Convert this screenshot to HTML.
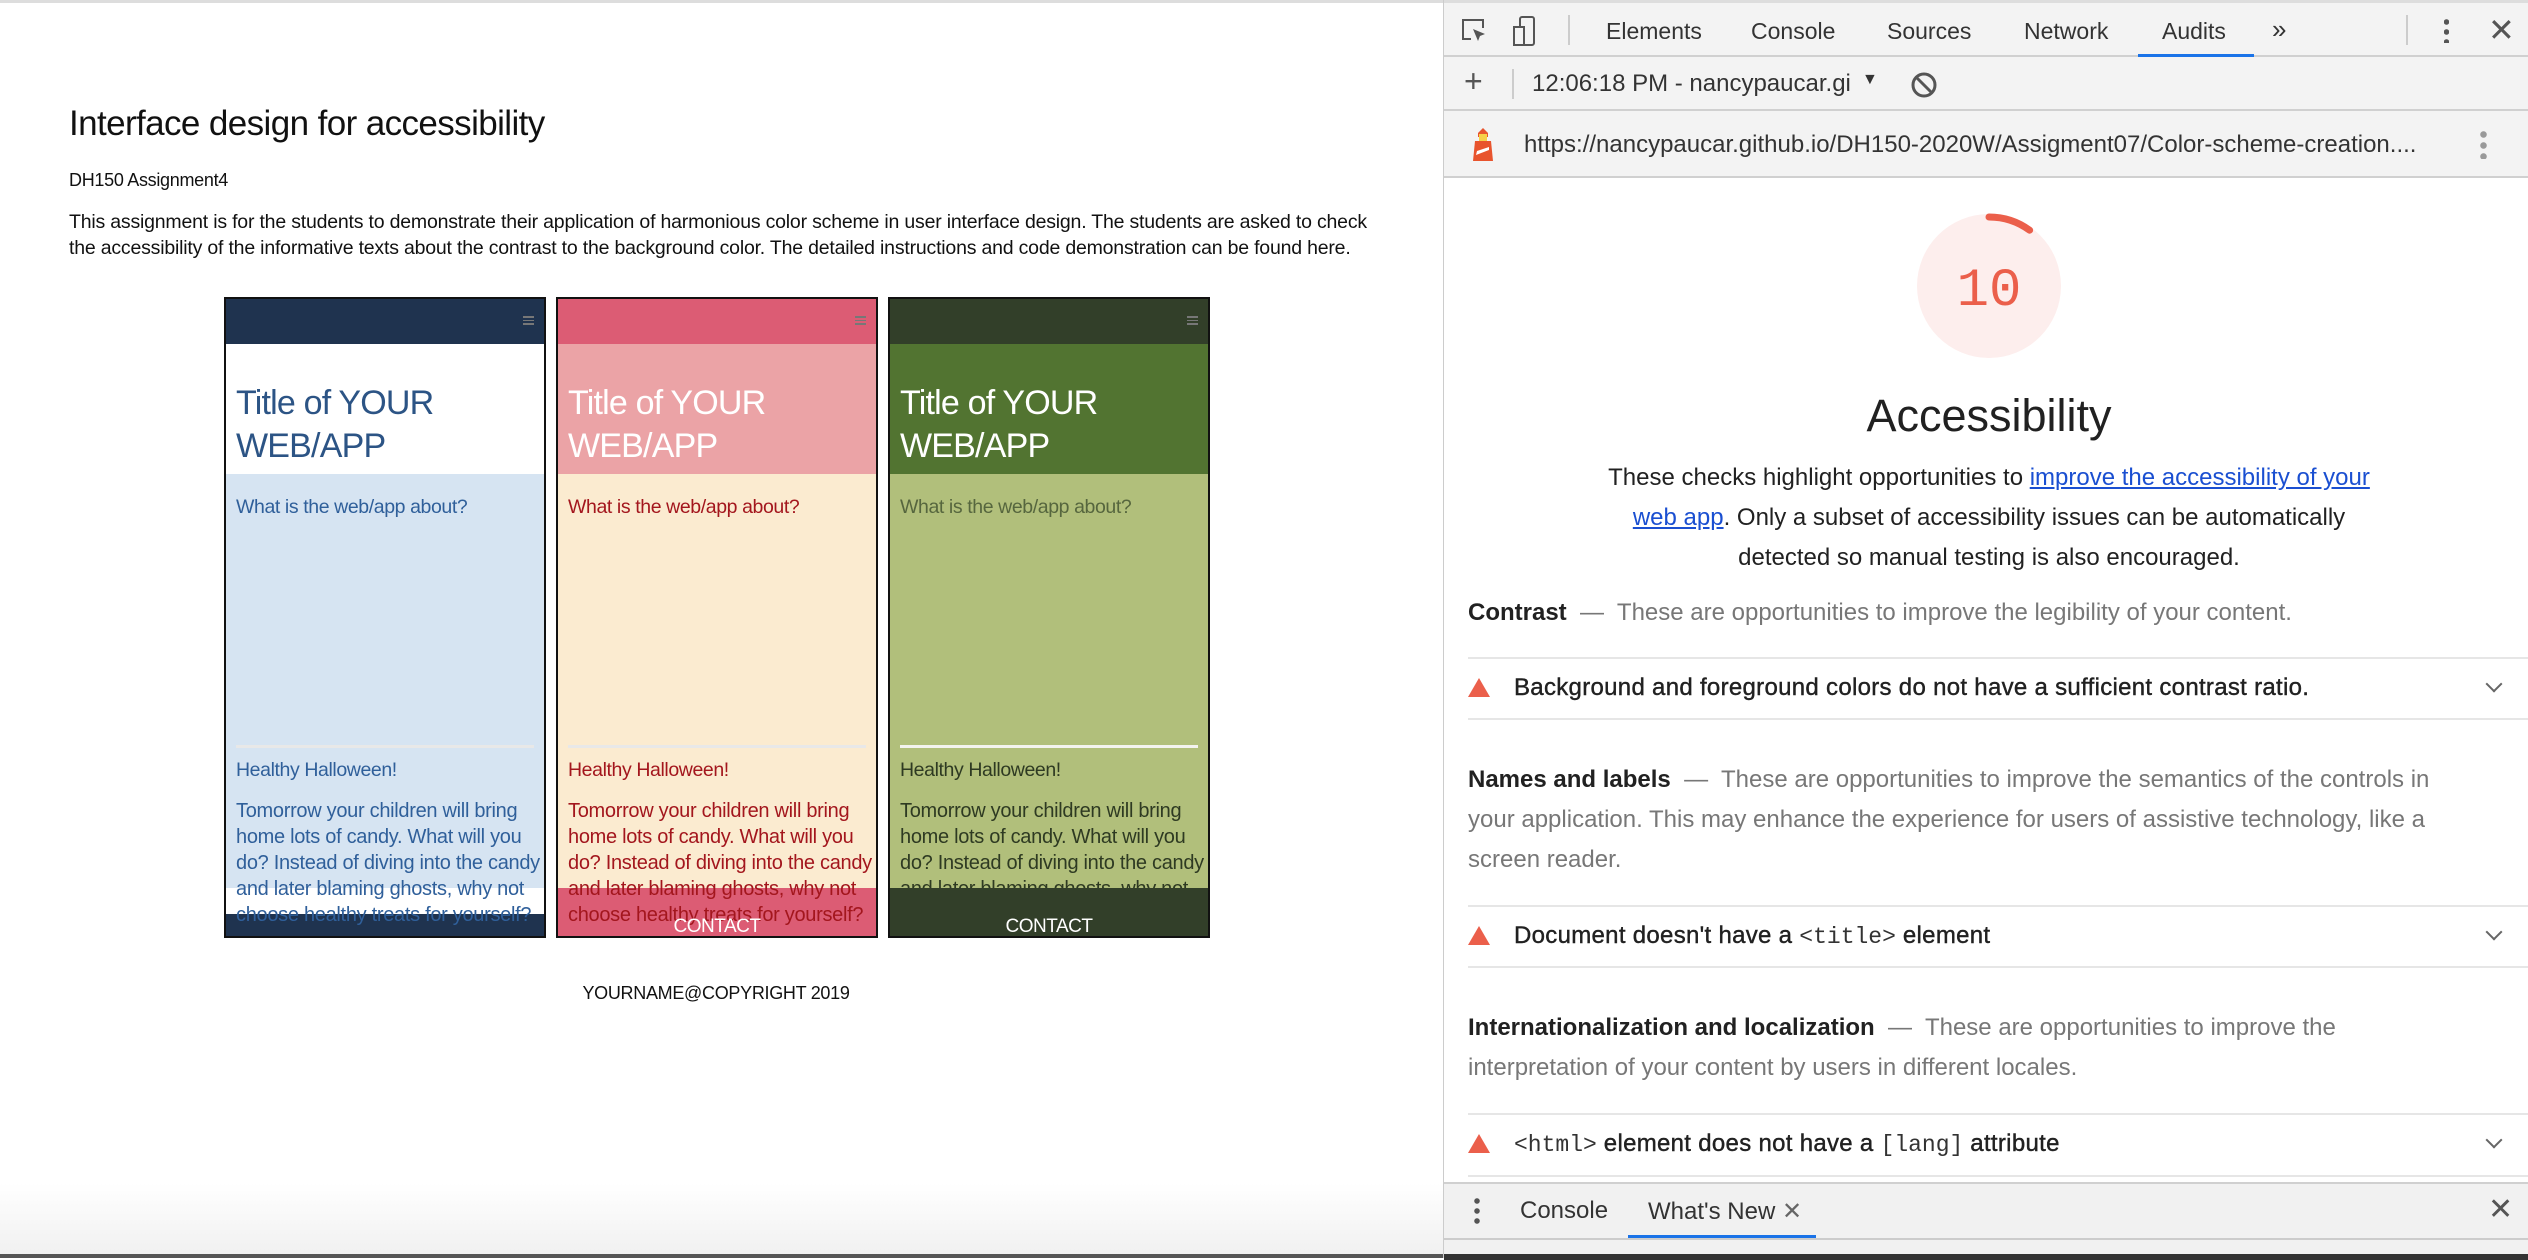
<!DOCTYPE html>
<html><head><meta charset="utf-8"><style>
*{margin:0;padding:0;box-sizing:border-box}
body{width:2528px;height:1258px;position:relative;overflow:hidden;background:#fff;font-family:"Liberation Sans",sans-serif}
.a{position:absolute;white-space:nowrap}
.left{position:absolute;left:0;top:0;width:1443px;height:1254px;background:linear-gradient(#fff 0,#fff 1180px,#f0f0f0 1254px);border-top:3px solid #ddd}
.ph{position:absolute;top:294px;width:322px;height:641px;border:2px solid #111;overflow:hidden}
.hd{position:absolute;left:0;top:0;right:0;height:45px}
.menu{position:absolute;right:10px;top:17px;width:11px;height:9px;border-top:2px solid #777;border-bottom:2px solid #777}
.menu:after{content:"";position:absolute;left:0;right:0;top:2px;border-top:1px solid #777}
.tt{position:absolute;left:0;right:0;top:45px;height:130px;padding:38px 0 0 10px;font-size:34px;line-height:43px;letter-spacing:-0.8px}
.ab{position:absolute;left:0;right:0;top:175px;bottom:0}
.q{position:absolute;left:10px;top:22px;font-size:19.5px;letter-spacing:-0.4px}
.hr{position:absolute;left:10px;right:10px;top:271px;height:3px;background:#e8e8e8}
.h{position:absolute;left:10px;top:285px;font-size:19.5px;letter-spacing:-0.4px}
.b{position:absolute;left:10px;top:324px;width:310px;font-size:20px;line-height:26px;letter-spacing:-0.3px;white-space:nowrap}
.ct{position:absolute;left:0;right:0;top:617px;text-align:center;color:#fff;font-size:19px;letter-spacing:-0.5px}
.dt{position:absolute;left:1443px;top:0;width:1085px;height:1258px;background:#fff;border-left:1px solid #ccc}
.bar{position:absolute;left:0;right:0;background:#f3f3f3;border-bottom:2px solid #d0d0d0}
.tab{position:absolute;top:15px;font-size:23px;color:#333}
.sec{position:absolute;left:24px;font-size:24px;color:#777;line-height:40px;width:1010px}
.sec b{color:#212121}
.line{position:absolute;left:24px;right:0;height:2px;background:#e6e6e6}
.item{position:absolute;left:24px;right:20px;font-size:24px;color:#212121;-webkit-text-stroke:0.4px #212121;letter-spacing:0.3px}
.tri{display:inline-block;width:0;height:0;border-left:11px solid transparent;border-right:11px solid transparent;border-bottom:19px solid #eb5f4b;margin-right:24px;vertical-align:-2px}
.chev{position:absolute;right:8px;top:4px;width:12px;height:12px;border-right:2px solid #666;border-bottom:2px solid #666;transform:rotate(45deg);-webkit-text-stroke:0}
code{font-family:"Liberation Mono",monospace;font-size:23px;color:#333;letter-spacing:0;-webkit-text-stroke:0}
</style></head><body>
<div class="left">
<div class="a" style="left:69px;top:101px;font-size:35px;color:#111;letter-spacing:-0.6px">Interface design for accessibility</div>
<div class="a" style="left:69px;top:167px;font-size:18px;color:#111;letter-spacing:-0.3px">DH150 Assignment4</div>
<div class="a" style="left:69px;top:206px;font-size:19.5px;line-height:26px;color:#111;letter-spacing:-0.2px">This assignment is for the students to demonstrate their application of harmonious color scheme in user interface design. The students are asked to check<br>the accessibility of the informative texts about the contrast to the background color. The detailed instructions and code demonstration can be found here.</div>

<div class="ph" style="left:224px">
 <div class="hd" style="background:#1f334f"><div class="menu"></div></div>
 <div class="tt" style="background:#fff;color:#2c5485">Title of YOUR<br>WEB/APP</div>
 <div class="ab" style="background:#d6e4f2;color:#2f5f9a">
  <div class="q">What is the web/app about?</div><div class="hr"></div>
  <div class="h">Healthy Halloween!</div>
  <div style="position:absolute;left:0;right:0;top:414px;height:26px;background:#fff"></div>
  <div style="position:absolute;left:0;right:0;top:440px;bottom:0;background:#1f334f"></div>
  <div class="b">Tomorrow your children will bring<br>home lots of candy. What will you<br>do? Instead of diving into the candy<br>and later blaming ghosts, why not<br>choose healthy treats for yourself?</div>
 </div>
</div>

<div class="ph" style="left:556px">
 <div class="hd" style="background:#dc5c74"><div class="menu"></div></div>
 <div class="tt" style="background:#eba3a6;color:#fff">Title of YOUR<br>WEB/APP</div>
 <div class="ab" style="background:#fbebd0;color:#a3161d">
  <div class="q">What is the web/app about?</div><div class="hr"></div>
  <div class="h">Healthy Halloween!</div>
  <div style="position:absolute;left:0;right:0;top:414px;bottom:0;background:#dc5c74"></div>
  <div class="b">Tomorrow your children will bring<br>home lots of candy. What will you<br>do? Instead of diving into the candy<br>and later blaming ghosts, why not<br>choose healthy treats for yourself?</div>
 </div>
 <div class="ct">CONTACT</div>
</div>

<div class="ph" style="left:888px">
 <div class="hd" style="background:#323f29"><div class="menu"></div></div>
 <div class="tt" style="background:#527431;color:#fff">Title of YOUR<br>WEB/APP</div>
 <div class="ab" style="background:#b1bf7b;color:#2e3a22">
  <div class="q" style="color:#56663e">What is the web/app about?</div><div class="hr" style="background:#f3f3ee"></div>
  <div class="h">Healthy Halloween!</div>
  <div class="b">Tomorrow your children will bring<br>home lots of candy. What will you<br>do? Instead of diving into the candy<br>and later blaming ghosts, why not<br>choose healthy treats for yourself?</div>
  <div style="position:absolute;left:0;right:0;top:414px;bottom:0;background:#323f29"></div>
 </div>
 <div class="ct">CONTACT</div>
</div>

<div class="a" style="left:0;width:1432px;text-align:center;top:980px;font-size:18px;color:#111;letter-spacing:-0.3px">YOURNAME@COPYRIGHT 2019</div>
</div>
<div style="position:absolute;left:0;top:1254px;width:1443px;height:4px;background:#555"></div>

<div class="dt">
 <div class="bar" style="top:0;height:57px;border-top:3px solid #ddd">
  <svg class="a" style="left:16px;top:14px" width="28" height="28" viewBox="0 0 28 28"><path d="M11 22H3V3h20v8" fill="none" stroke="#555" stroke-width="2"/><path d="M13 12l12 5-5 2-2 5z" fill="#555"/></svg>
  <svg class="a" style="left:68px;top:12px" width="30" height="32" viewBox="0 0 30 32"><rect x="8" y="2" width="14" height="28" rx="2" fill="none" stroke="#555" stroke-width="2"/><rect x="2" y="12" width="10" height="18" fill="#f3f3f3" stroke="#555" stroke-width="2"/></svg>
  <div style="position:absolute;left:124px;top:12px;width:2px;height:30px;background:#ccc"></div>
  <div class="tab" style="left:162px">Elements</div>
  <div class="tab" style="left:307px">Console</div>
  <div class="tab" style="left:443px">Sources</div>
  <div class="tab" style="left:580px">Network</div>
  <div class="tab" style="left:718px">Audits</div>
  <div style="position:absolute;left:694px;width:116px;top:51px;height:3px;background:#1a73e8"></div>
  <div class="tab" style="left:828px;top:11px;font-size:26px">»</div>
  <div style="position:absolute;left:962px;top:12px;width:2px;height:30px;background:#ccc"></div>
  <div class="a" style="left:1000px;top:14px;width:5px;height:26px;background:radial-gradient(circle,#555 2.5px,transparent 3px) 0 0/5px 10px repeat-y"></div>
  <div class="tab" style="left:1044px;top:8px;font-size:32px;color:#555">✕</div>
 </div>
 <div class="bar" style="top:57px;height:54px">
  <div class="tab" style="left:20px;top:6px;font-size:32px;color:#555">+</div>
  <div style="position:absolute;left:68px;top:12px;width:2px;height:30px;background:#ccc"></div>
  <div class="tab" style="left:88px;top:13px;font-size:24px">12:06:18 PM - nancypaucar.gi</div>
  <div class="tab" style="left:418px;top:14px;font-size:16px">▼</div>
  <svg class="a" style="left:466px;top:14px" width="28" height="28" viewBox="0 0 28 28"><circle cx="14" cy="14" r="11" fill="none" stroke="#555" stroke-width="3"/><path d="M6 6l16 16" stroke="#555" stroke-width="3"/></svg>
 </div>
 <div class="bar" style="top:111px;height:67px;background:#f3f3f3">
  <svg class="a" style="left:26px;top:16px" width="26" height="34" viewBox="0 0 26 34"><path d="M8 6l5-5 5 5v4H8z" fill="#e8542d"/><rect x="9" y="7" width="8" height="7" fill="#f7d049"/><path d="M5 14h16l2 20H3z" fill="#e8542d"/><path d="M7 24l12-4v3L6 28z" fill="#fff"/></svg>
  <div class="tab" style="left:80px;top:20px;font-size:24px">https://nancypaucar.github.io/DH150-2020W/Assigment07/Color-scheme-creation....</div>
  <div class="a" style="left:1036px;top:18px;width:7px;height:30px;background:radial-gradient(circle,#999 3px,transparent 3.5px) 0 0/7px 11px repeat-y"></div>
 </div>
 <svg class="a" style="left:472px;top:213px" width="146" height="146" viewBox="0 0 146 146"><circle cx="73" cy="73" r="72" fill="#fdeeed"/><path d="M73 4 A69 69 0 0 1 113.6 17.2" fill="none" stroke="#eb5f4b" stroke-width="7" stroke-linecap="round"/><text x="73" y="92" text-anchor="middle" font-family="Liberation Mono,monospace" font-size="54" fill="#eb5f4b">10</text></svg>
 <div class="a" style="left:0;width:1090px;text-align:center;top:390px;font-size:45px;color:#212121">Accessibility</div>
 <div class="a" style="left:0;width:1090px;text-align:center;top:458px;font-size:24px;line-height:40px;color:#212121">These checks highlight opportunities to <span style="color:#1a4fd1;text-decoration:underline">improve the accessibility of your</span><br><span style="color:#1a4fd1;text-decoration:underline">web app</span>. Only a subset of accessibility issues can be automatically<br>detected so manual testing is also encouraged.</div>
 <div class="sec" style="top:593px"><b>Contrast</b> &nbsp;—&nbsp; These are opportunities to improve the legibility of your content.</div>
 <div class="line" style="top:657px"></div>
 <div class="item" style="top:674px"><span class="tri"></span>Background and foreground colors do not have a sufficient contrast ratio.<div class="chev"></div></div>
 <div class="line" style="top:718px"></div>
 <div class="sec" style="top:760px;white-space:normal"><b>Names and labels</b> &nbsp;—&nbsp; These are opportunities to improve the semantics of the controls in your application. This may enhance the experience for users of assistive technology, like a screen reader.</div>
 <div class="line" style="top:905px"></div>
 <div class="item" style="top:922px"><span class="tri"></span>Document doesn't have a <code>&lt;title&gt;</code> element<div class="chev"></div></div>
 <div class="line" style="top:966px"></div>
 <div class="sec" style="top:1008px;white-space:normal;width:960px"><b>Internationalization and localization</b> &nbsp;—&nbsp; These are opportunities to improve the interpretation of your content by users in different locales.</div>
 <div class="line" style="top:1113px"></div>
 <div class="item" style="top:1130px"><span class="tri"></span><code>&lt;html&gt;</code> element does not have a <code>[lang]</code> attribute<div class="chev"></div></div>
 <div class="line" style="top:1175px"></div>
 <div class="bar" style="top:1182px;height:76px;background:#f1f1f1;border-top:2px solid #d0d0d0;border-bottom:none">
  <div class="a" style="left:30px;top:12px;width:6px;height:30px;background:radial-gradient(circle,#555 2.5px,transparent 3px) 0 0/6px 10px repeat-y"></div>
  <div class="tab" style="left:76px;top:13px;font-size:24px">Console</div>
  <div class="tab" style="left:204px;top:13px;font-size:24px">What's New <span style="color:#666">✕</span></div>
  <div style="position:absolute;left:184px;width:188px;top:51px;height:3px;background:#1a73e8"></div>
  <div style="position:absolute;left:0;right:0;top:54px;height:2px;background:#ccc"></div>
  <div class="tab" style="left:1044px;top:8px;font-size:30px;color:#555">✕</div>
  <div style="position:absolute;left:0;right:0;top:70px;height:6px;background:#333"></div>
 </div>
</div>
</body></html>
